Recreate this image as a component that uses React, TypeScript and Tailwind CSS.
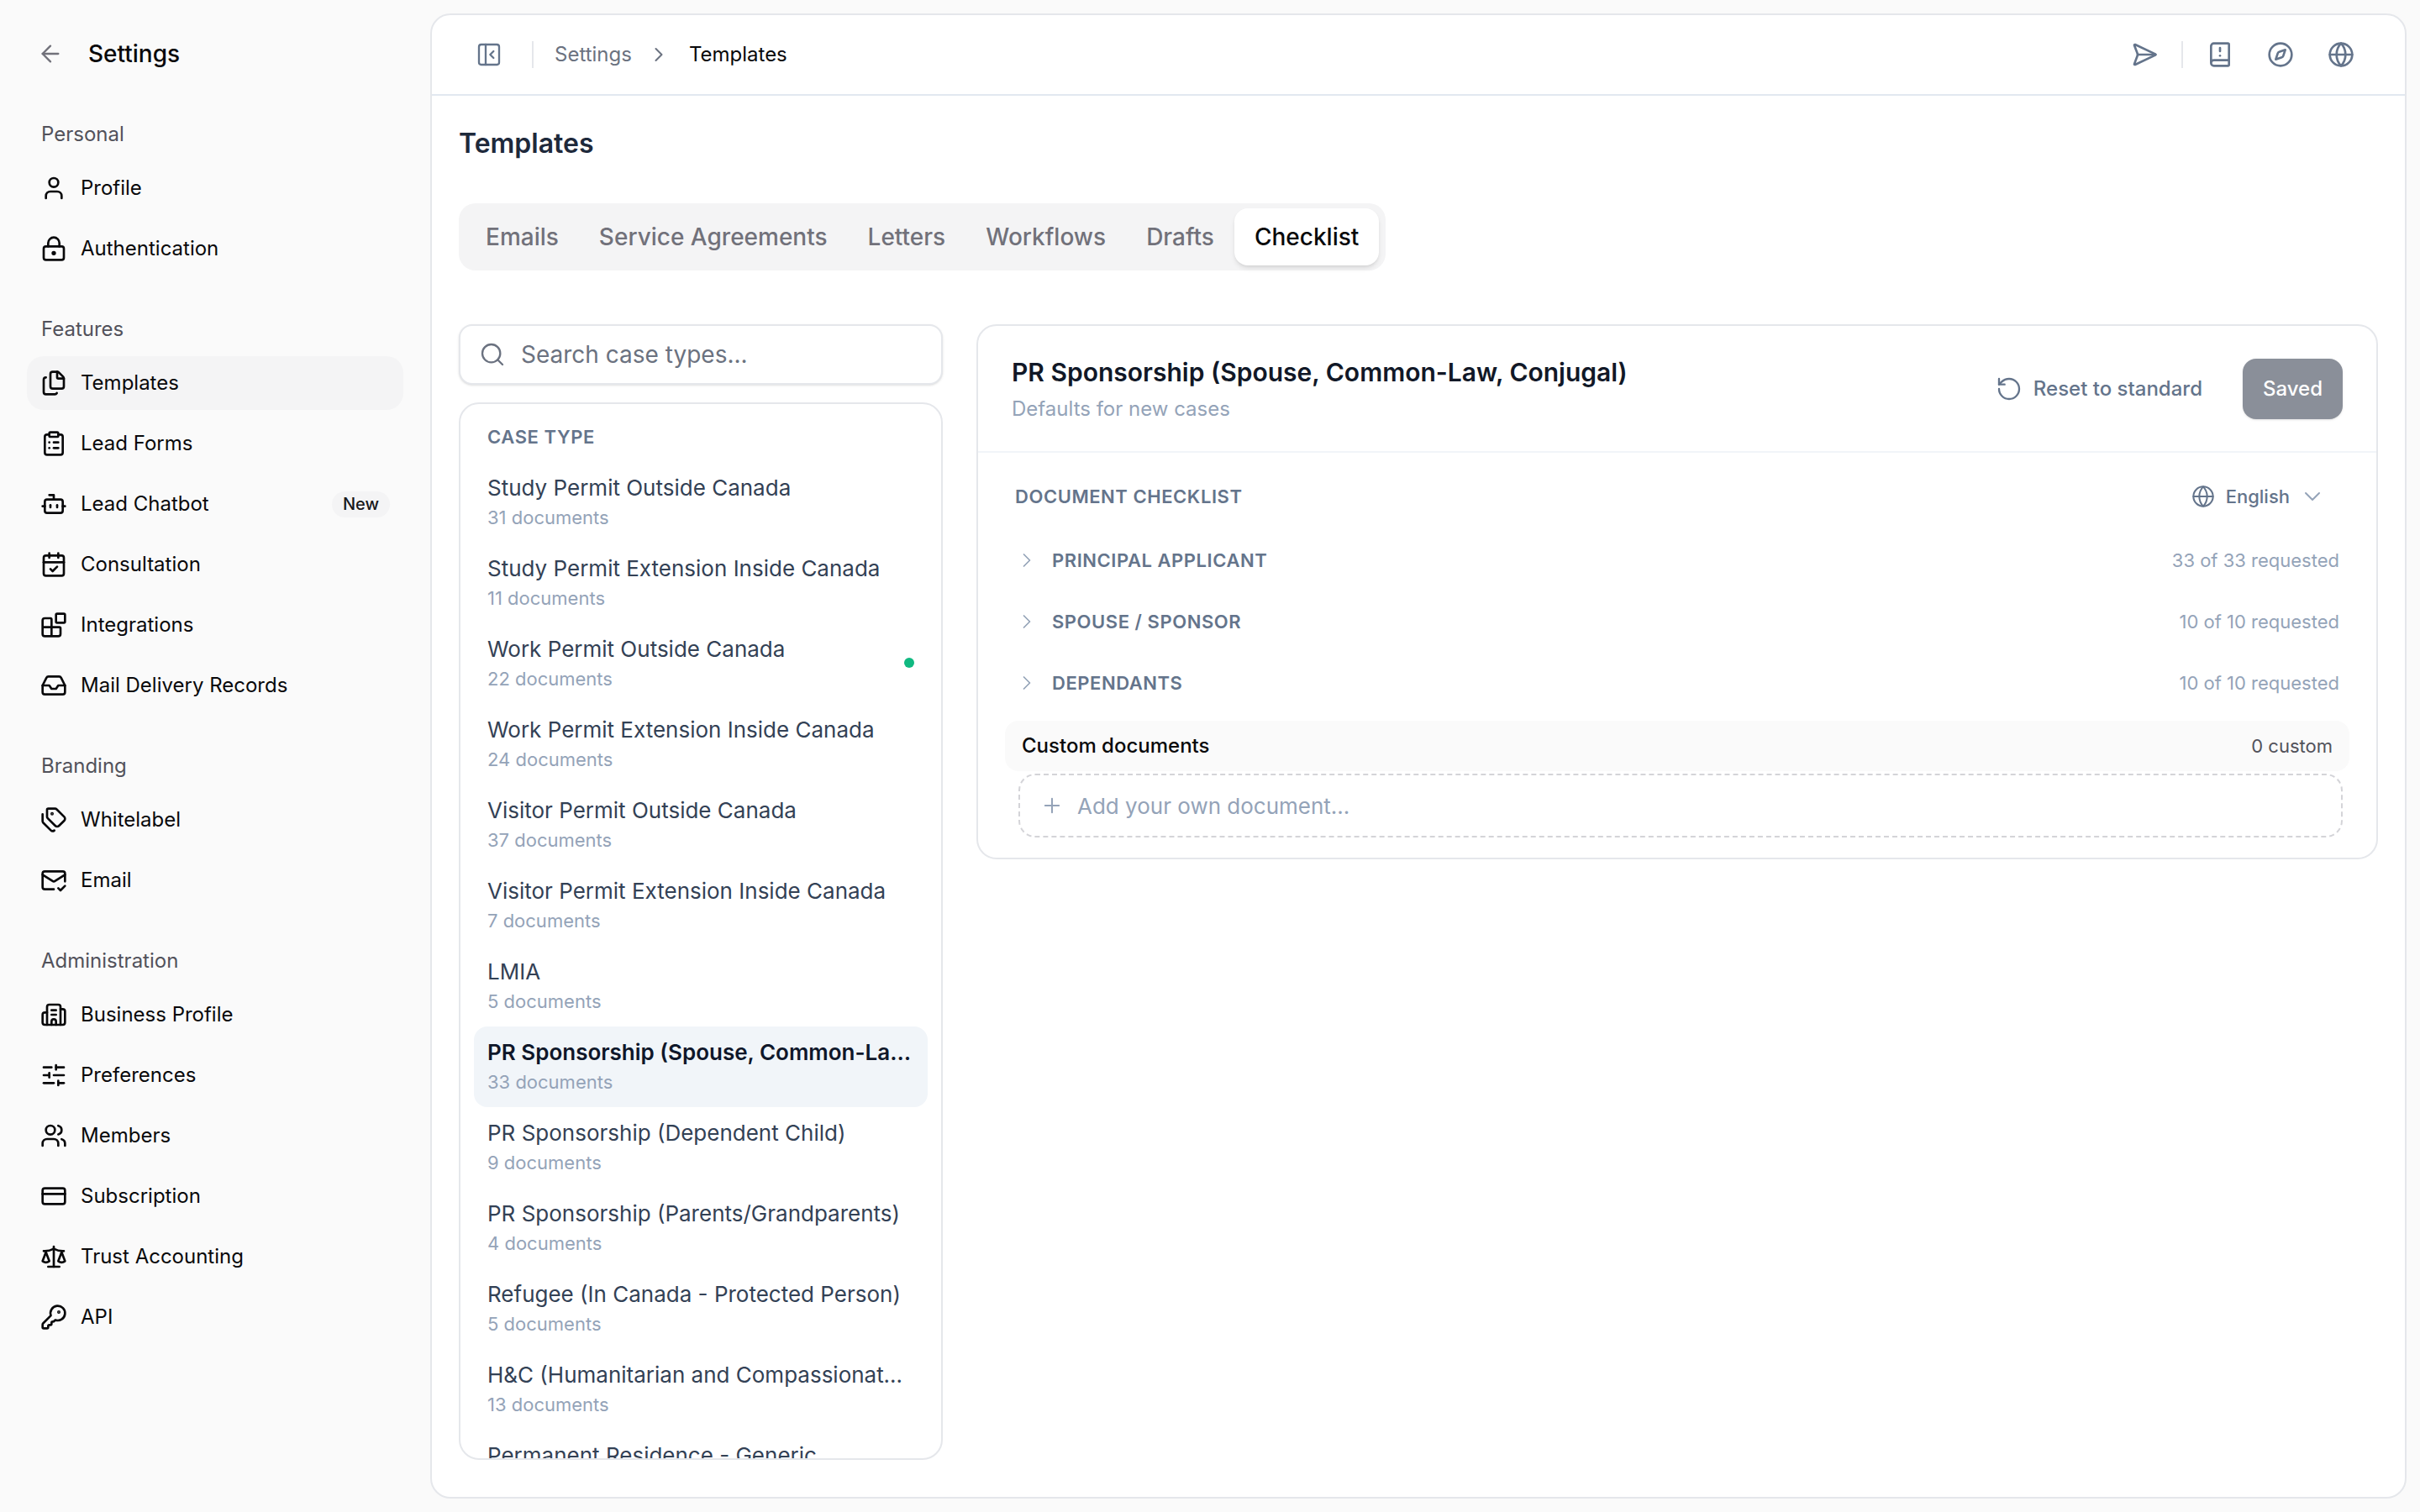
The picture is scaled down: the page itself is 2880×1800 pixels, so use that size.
import {
  ArrowLeft, User, LockKeyhole, Files, ClipboardList, Bot, CalendarCheck, Blocks, Inbox, Tags, MailCheck,
  Building2, SlidersHorizontal, Users, CreditCard, Scale, KeyRound, PanelLeftClose, ChevronRight, ChevronDown,
  SendHorizontal, BookAlert, Compass, Globe, Search, RotateCcw, Plus,
} from "lucide-react";

const NAV = [
  { label: "Personal", items: [{ name: "Profile", icon: User }, { name: "Authentication", icon: LockKeyhole }] },
  {
    label: "Features",
    items: [
      { name: "Templates", icon: Files, active: true },
      { name: "Lead Forms", icon: ClipboardList },
      { name: "Lead Chatbot", icon: Bot, badge: "New" },
      { name: "Consultation", icon: CalendarCheck },
      { name: "Integrations", icon: Blocks },
      { name: "Mail Delivery Records", icon: Inbox },
    ],
  },
  { label: "Branding", items: [{ name: "Whitelabel", icon: Tags }, { name: "Email", icon: MailCheck }] },
  {
    label: "Administration",
    items: [
      { name: "Business Profile", icon: Building2 },
      { name: "Preferences", icon: SlidersHorizontal },
      { name: "Members", icon: Users },
      { name: "Subscription", icon: CreditCard },
      { name: "Trust Accounting", icon: Scale },
      { name: "API", icon: KeyRound },
    ],
  },
];

const TABS = ["Emails", "Service Agreements", "Letters", "Workflows", "Drafts", "Checklist"];

const CASE_TYPES = [
  { name: "Study Permit Outside Canada", docs: 31 },
  { name: "Study Permit Extension Inside Canada", docs: 11 },
  { name: "Work Permit Outside Canada", docs: 22, dot: true },
  { name: "Work Permit Extension Inside Canada", docs: 24 },
  { name: "Visitor Permit Outside Canada", docs: 37 },
  { name: "Visitor Permit Extension Inside Canada", docs: 7 },
  { name: "LMIA", docs: 5 },
  { name: "PR Sponsorship (Spouse, Common-Law, Conjugal)", docs: 33, active: true },
  { name: "PR Sponsorship (Dependent Child)", docs: 9 },
  { name: "PR Sponsorship (Parents/Grandparents)", docs: 4 },
  { name: "Refugee (In Canada - Protected Person)", docs: 5 },
  { name: "H&C (Humanitarian and Compassionate Grounds)", docs: 13 },
  { name: "Permanent Residence - Generic", docs: 20 },
];

const SECTIONS = [
  { name: "Principal Applicant", count: "33 of 33 requested" },
  { name: "Spouse / Sponsor", count: "10 of 10 requested" },
  { name: "Dependants", count: "10 of 10 requested" },
];

function Sidebar() {
  return (
    <aside className="w-[512px] flex-none pl-8 pr-8 pt-8">
      <div className="flex h-16 items-center gap-[29px] pl-3">
        <ArrowLeft size={32} strokeWidth={1.75} className="text-[#71717a]" />
        <span className="text-[28px] font-medium text-[#09090b]">Settings</span>
      </div>
      <div className="mt-[44px] flex flex-col gap-[44px]">
        {NAV.map((section) => (
          <div key={section.label}>
            <div className="mb-[12px] flex h-10 items-center pl-[17px] text-[24px] text-[#52525b]">{section.label}</div>
            <div className="flex flex-col gap-2">
              {section.items.map((item: any) => (
                <div key={item.name} className={`flex h-16 items-center gap-4 rounded-[20px] px-4 ${item.active ? "bg-[#f4f4f5]" : ""}`}>
                  <item.icon size={32} className="flex-none text-[#09090b]" />
                  <span className="flex-1 text-[24px] text-[#09090b]">{item.name}</span>
                  {item.badge && (
                    <span className="flex h-[31px] items-center rounded-full bg-[#f4f4f5] px-[13px] text-[20px] font-medium text-[#18181b]">{item.badge}</span>
                  )}
                </div>
              ))}
            </div>
          </div>
        ))}
      </div>
    </aside>
  );
}

function TopBar() {
  return (
    <header className="flex h-24 flex-none items-center border-b-2 border-[#e2e8f0] pl-[52px] pr-[60px]">
      <PanelLeftClose size={32} strokeWidth={1.75} className="text-[#64748b]" />
      <div className="ml-[35px] h-8 w-[2px] bg-[#e5e7eb]" />
      <span className="ml-[25px] text-[24px] text-[#6b7280]">Settings</span>
      <ChevronRight size={28} strokeWidth={1.75} className="ml-[18px] text-[#6b7280]" />
      <span className="ml-[22px] text-[24px] text-[#09090b]">Templates</span>
      <div className="ml-auto flex items-center">
        <SendHorizontal size={32} strokeWidth={2} className="text-[#64748b]" />
        <div className="mx-[28px] h-8 w-[2px] bg-[#e5e7eb]" />
        <div className="flex items-center gap-10">
          <BookAlert size={32} strokeWidth={2} className="text-[#64748b]" />
          <Compass size={32} strokeWidth={2} className="text-[#64748b]" />
          <Globe size={32} strokeWidth={2} className="text-[#64748b]" />
        </div>
      </div>
    </header>
  );
}

function CaseList() {
  return (
    <div className="flex w-[576px] flex-none flex-col gap-[21px]">
      <div className="flex h-[72px] flex-none items-center gap-[18px] rounded-[16px] border-2 border-[#e5e7eb] bg-white pl-[22px] shadow-sm">
        <Search size={32} strokeWidth={1.75} className="text-[#6b7280]" />
        <span className="text-[28px] text-[#6b7280]">Search case types...</span>
      </div>
      <div className="h-[1259px] overflow-hidden rounded-[24px] border-2 border-[#e5e7eb] bg-white px-4">
        <div className="flex h-[69px] items-end px-4 pb-[14px] text-[22px] leading-[32px] font-semibold tracking-[0.6px] text-[#64748b] uppercase">Case Type</div>
        {CASE_TYPES.map((c) => (
          <div key={c.name} className={`relative h-24 rounded-[16px] px-4 pt-[13px] ${c.active ? "bg-[#f1f5f9]" : ""}`}>
            <div className={`truncate text-[26px] leading-[36px] ${c.active ? "font-semibold text-[#0f172a]" : "text-[#334155]"}`}>{c.name}</div>
            <div className="text-[22px] leading-[34px] text-[#94a3b8]">{c.docs} documents</div>
            {c.dot && <span className="absolute top-[41px] right-4 h-3 w-3 rounded-full bg-[#10b981]" />}
          </div>
        ))}
      </div>
    </div>
  );
}

function Detail() {
  return (
    <div className="h-[637px] flex-1 rounded-[24px] border-2 border-[#e5e7eb] bg-white">
      <div className="flex h-[151px] items-center justify-between border-b-2 border-[#f1f5f9] pr-[40px] pl-[40px]">
        <div className="pt-[3px]">
          <div className="text-[30px] leading-[44px] font-semibold text-[#111827]">PR Sponsorship (Spouse, Common-Law, Conjugal)</div>
          <div className="mt-[2px] text-[24px] leading-[40px] text-[#94a3b8]">Defaults for new cases</div>
        </div>
        <div className="flex items-center">
          <RotateCcw size={32} strokeWidth={1.75} className="text-[#64748b]" />
          <span className="ml-[13px] text-[24px] font-medium text-[#64748b]">Reset to standard</span>
          <button className="ml-12 flex h-[72px] items-center rounded-[16px] bg-[#8a8f99] px-6 text-[24px] font-medium text-white shadow-sm">Saved</button>
        </div>
      </div>
      <div className="px-[32px] pt-[30px]">
        <div className="flex h-[44px] items-center justify-between pr-[28px] pl-[12px]">
          <span className="text-[22px] font-semibold tracking-[0.55px] text-[#64748b] uppercase">Document Checklist</span>
          <div className="flex items-center">
            <Globe size={28} strokeWidth={1.75} className="text-[#64748b]" />
            <span className="ml-[13px] text-[22px] font-medium text-[#64748b]">English</span>
            <ChevronDown size={32} strokeWidth={1.5} className="ml-[11px] text-[#94a3b8]" />
          </div>
        </div>
        <div className="mt-[34px] flex flex-col gap-[33px]">
          {SECTIONS.map((s) => (
            <div key={s.name} className="flex h-10 items-center pr-[12px] pl-[12px]">
              <ChevronRight size={28} strokeWidth={1.5} className="text-[#94a3b8]" />
              <span className="ml-4 text-[22px] font-semibold tracking-[0.55px] text-[#64748b] uppercase">{s.name}</span>
              <span className="ml-auto text-[22px] text-[#94a3b8]">{s.count}</span>
            </div>
          ))}
        </div>
      </div>
      <div className="mx-[32px] mt-[25px] flex h-[60px] items-center justify-between rounded-[16px] bg-[#fafafa] px-5">
        <span className="text-[24px] font-medium text-[#09090b]">Custom documents</span>
        <span className="text-[22px] text-[#52525b]">0 custom</span>
      </div>
      <div className="mt-[3px] mr-10 ml-[48px] flex h-[76px] items-center rounded-[20px] border-2 border-dashed border-[#d4d4d8] pl-6">
        <Plus size={28} strokeWidth={1.75} className="text-[#94a3b8]" />
        <span className="ml-[16px] text-[26px] text-[#94a3b8]">Add your own document...</span>
      </div>
    </div>
  );
}

export default function App() {
  return (
    <div className="flex h-screen overflow-hidden bg-[#fafafa] [font-family:Inter,sans-serif]">
      <Sidebar />
      <main className="my-4 mr-4 flex flex-1 flex-col overflow-hidden rounded-[24px] border-2 border-[#e5e7eb] bg-white">
        <TopBar />
        <div className="flex-1 px-8">
          <h1 className="mt-[29px] text-[32px] leading-[56px] font-semibold text-[#1e293b]">Templates</h1>
          <div className="mt-[43px] inline-flex h-20 items-center rounded-[20px] bg-[#f4f4f5] px-2">
            {TABS.map((t) => (
              <div
                key={t}
                className={`flex h-[68px] items-center rounded-[16px] px-6 text-[28px] font-medium ${t === "Checklist" ? "bg-white text-[#09090b] shadow-md" : "text-[#71717a]"}`}
              >
                {t}
              </div>
            ))}
          </div>
          <div className="mt-[64px] flex items-start gap-10">
            <CaseList />
            <Detail />
          </div>
        </div>
      </main>
    </div>
  );
}
